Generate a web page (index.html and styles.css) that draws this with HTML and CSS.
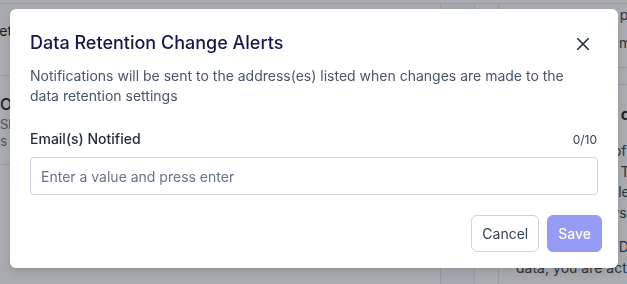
FILE: index.html
```html
<!DOCTYPE html>
<html lang="en">
<head>
    <meta charset="UTF-8">
    <meta name="viewport" content="width=device-width, initial-scale=1.0">
    <title>Data Retention</title>
    <link rel="stylesheet" href="styles.css">
</head>
<body>
    <!-- Page behind the dialog -->
    <div class="page">
        <section class="list">
            <div class="row">
                <p class="row-text">Data retention preset</p>
            </div>
            <div class="row row-tall">
                <p class="row-title">Overview</p>
                <p class="row-sub">Slack messages</p>
                <p class="row-sub row-sub-shift">Attachments</p>
            </div>
        </section>
        <div class="gutter"></div>
        <div class="rail"></div>
        <aside class="side">
            <div class="side-top">
                <p class="side-text">Your workshop policy applies</p>
                <p class="side-text">Your content is more than</p>
            </div>
            <div class="side-tabs"></div>
            <div class="side-body">
                <h3>Retention and deletion</h3>
                <p>Your retention of<br>up to 24 hours. Those<br>changes are deleted<br>sent to the users</p>
                <p>Content is lost. Deleting<br>data; you are acting</p>
            </div>
        </aside>
    </div>

    <!-- Dialog -->
    <div class="overlay">
        <div class="modal">
            <div class="modal-header">
                <h2>Data Retention Change Alerts</h2>
                <button class="close-btn" aria-label="Close">
                    <svg width="12" height="12" viewBox="0 0 12 12">
                        <path d="M0.8 0.8 L11.2 11.2 M11.2 0.8 L0.8 11.2" stroke="#1e293b" stroke-width="1.6" stroke-linecap="round" fill="none"/>
                    </svg>
                </button>
            </div>
            <p class="modal-desc">Notifications will be sent to the address(es) listed when changes are made to the data retention settings</p>
            <div class="field">
                <div class="field-head">
                    <label for="emails">Email(s) Notified</label>
                    <span class="count">0/10</span>
                </div>
                <input type="text" id="emails" placeholder="Enter a value and press enter">
            </div>
            <div class="modal-footer">
                <button class="btn btn-cancel">Cancel</button>
                <button class="btn btn-save" disabled>Save</button>
            </div>
        </div>
    </div>
</body>
</html>
```

FILE: styles.css
```css
body {
    font-family: 'Inter', 'Liberation Sans', sans-serif;
    margin: 0;
    padding: 0;
    background-color: #fff;
    width: 627px;
    height: 284px;
    overflow: hidden;
}
p, h2, h3 {
    margin: 0;
}
/* Pagina de fundo */
.page {
    display: grid;
    grid-template-columns: 441px 34px 24px 320px;
    height: 281px;
    border-top: 1px solid #e5e7eb;
    margin-top: 3px;
}
.list {
    border-right: 1px solid #e5e7eb;
    margin-left: -40px;
}
.row {
    height: 72px;
    border-bottom: 1px solid #e5e7eb;
    padding: 17px 0 0 18px;
    box-sizing: border-box;
}
.row-tall {
    height: 89px;
    padding-top: 16px;
}
.row-text {
    font-size: 14px;
    color: #111827;
    line-height: 20px;
    white-space: nowrap;
    margin-left: -105px;
}
.row-title {
    font-size: 16px;
    font-weight: 500;
    color: #111827;
    line-height: 24px;
    margin-left: 22px;
}
.row-sub {
    font-size: 13px;
    color: #6b7280;
    line-height: 17px;
    margin-left: 22px;
    white-space: nowrap;
}
.row-sub-shift {
    margin-left: -48px;
}
.gutter {
    border-right: 1px solid #e5e7eb;
    background-color: #f9fafb;
}
.rail {
    border-right: 1px solid #e5e7eb;
}
.side-top {
    height: 67px;
    border-bottom: 1px solid #e5e7eb;
    padding-left: 17px;
    box-sizing: border-box;
}
.side-text {
    font-size: 14px;
    line-height: 28px;
    color: #374151;
    white-space: nowrap;
    margin-top: -3px;
}
.side-text + .side-text {
    margin-top: 0;
}
.side-tabs {
    height: 17px;
    border-bottom: 1px solid #e5e7eb;
    box-sizing: border-box;
}
.side-body {
    padding: 17px 0 0 17px;
}
.side-body h3 {
    font-size: 16px;
    font-weight: 600;
    color: #111827;
    line-height: 24px;
    margin-bottom: 15px;
    margin-left: -6px;
}
.side-body p {
    font-size: 14px;
    line-height: 20.5px;
    color: #374151;
    white-space: nowrap;
    margin-bottom: 14px;
}
/* Dialogo */
.overlay {
    position: fixed;
    top: 0;
    left: 0;
    width: 100%;
    height: 100%;
    background-color: rgba(30, 33, 45, 0.38);
    padding: 9px 9px 16px 10px;
    box-sizing: border-box;
}
.modal {
    background-color: #fff;
    border-radius: 6px;
    box-shadow: 0px 4px 10px rgba(0, 0, 0, 0.12);
    padding: 20px 0 0 0;
    height: 259px;
    box-sizing: border-box;
}
.modal-header {
    display: flex;
    justify-content: space-between;
    align-items: center;
    padding: 0 20px;
}
.modal-header h2 {
    font-size: 18px;
    font-weight: 500;
    line-height: 28px;
    color: #121a4a;
}
.close-btn {
    background: none;
    border: none;
    padding: 0;
    margin: 2px 9px 0 0;
    width: 12px;
    height: 12px;
    display: flex;
    cursor: pointer;
}
.modal-desc {
    font-size: 14px;
    line-height: 20px;
    color: #475569;
    padding: 0 40px 0 20px;
    margin-top: 9px;
}
.field {
    padding: 0 20px;
    margin-top: 23px;
}
.field-head {
    display: flex;
    justify-content: space-between;
    align-items: baseline;
    margin-bottom: 8px;
}
.field-head label {
    font-size: 14px;
    font-weight: 500;
    line-height: 20px;
    color: #1e293b;
}
.count {
    font-size: 12px;
    color: #334155;
    margin-right: 1px;
}
.field input {
    width: 100%;
    box-sizing: border-box;
    height: 38px;
    border: 1px solid #cbd5e1;
    border-radius: 4px;
    padding: 0 10px;
    font-family: inherit;
    font-size: 14px;
    color: #1e293b;
    outline: none;
}
.field input::placeholder {
    color: #64748b;
}
.modal-footer {
    display: flex;
    justify-content: flex-end;
    gap: 8px;
    padding: 20px 16px 16px;
}
.btn {
    height: 37px;
    border-radius: 6px;
    font-family: inherit;
    font-size: 14px;
    font-weight: 400;
    padding: 0 10px;
    cursor: pointer;
}
.btn-cancel {
    background-color: #fff;
    border: 1px solid #cbd5e1;
    color: #334155;
}
.btn-save {
    background-color: #969cf5;
    border: 1px solid #969cf5;
    color: #fff;
    font-weight: 500;
}
```
